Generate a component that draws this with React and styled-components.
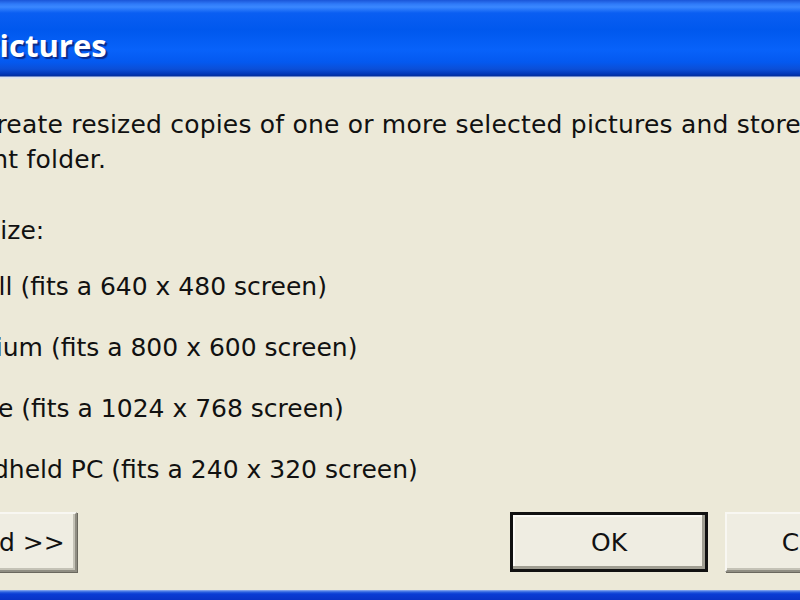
import styled, { createGlobalStyle } from "styled-components";

const GlobalStyle = createGlobalStyle`
  html, body {
    margin: 0;
    padding: 0;
    background: #ece9d8;
  }
  #root {
    width: 800px;
    height: 600px;
  }
`;

const Frame = styled.div`
  width: 800px;
  height: 600px;
  overflow: hidden;
  background: #ece9d8;
`;

const Dialog = styled.section`
  margin-left: -160px;
  width: 1120px;
  height: 600px;
  display: flex;
  flex-direction: column;
  background: #ece9d8;
  font-family: "DejaVu Sans", "Liberation Sans", sans-serif;
  font-size: 25px;
  color: #111;
`;

const TitleBar = styled.header`
  box-sizing: border-box;
  height: 79px;
  padding: 29px 0 0 35px;
  background: linear-gradient(
    to bottom,
    #1a55d8 0px,
    #2f7af8 4px,
    #3b88ff 7px,
    #0a5ef2 13px,
    #0058ee 30px,
    #0862fa 50px,
    #0459f0 62px,
    #0b4fd8 69px,
    #0036b8 74px,
    #002c9c 76px,
    #d6e0f2 77px,
    #e6e8e4 79px
  );
`;

const Title = styled.h1`
  margin: 0;
  font-family: "Open Sans", "DejaVu Sans", sans-serif;
  font-weight: 700;
  font-size: 31px;
  line-height: 32px;
  color: #fff;
  text-shadow: 2px 2px 1px #0a2a8a;
`;

const Body = styled.div`
  flex: 1;
  display: flex;
  flex-direction: column;
  padding: 28px 0 0 39px;
`;

const Intro = styled.p`
  margin: 0 0 0 -2px;
  width: 1045px;
  line-height: 35px;
  letter-spacing: 0.2px;
`;

const Label = styled.p`
  margin: 36px 0 8px;
  line-height: 35px;
`;

const Options = styled.div`
  display: flex;
  flex-direction: column;
`;

const Option = styled.label`
  display: flex;
  align-items: center;
  gap: 14px;
  height: 61px;
  line-height: 61px;
  padding-left: 16px;
`;

const Radio = styled.span`
  box-sizing: border-box;
  width: 34px;
  height: 34px;
  border-radius: 50%;
  border: 3px solid #1c5180;
  background: ${(p) =>
    p.$checked
      ? "radial-gradient(circle, #21a121 0 6px, #fff 7px)"
      : "linear-gradient(135deg, #dcdad0, #fff)"};
`;

const Buttons = styled.div`
  display: flex;
  align-items: center;
  gap: 17px;
  margin-top: 12px;
  width: 1044px;
`;

const Spacer = styled.div`
  flex: 1;
`;

const Button = styled.button`
  box-sizing: border-box;
  width: 198px;
  height: 60px;
  padding: 0;
  font-family: "DejaVu Sans", "Liberation Sans", sans-serif;
  font-size: 25px;
  color: #111;
  background: #efede2;
  border: ${(p) => (p.$default ? "3px solid #111" : "2px solid #f8f7f2")};
  border-right-color: ${(p) => (p.$default ? "#111" : "#8f8d82")};
  border-bottom-color: ${(p) => (p.$default ? "#111" : "#8f8d82")};
  box-shadow: ${(p) =>
    p.$default
      ? "inset -3px -3px 0 #a09e92, inset 2px 2px 0 #fbfaf5"
      : "inset -2px -2px 0 #c4c2b6, 1px 1px 0 #6a685e"};
`;

const BottomEdge = styled.div`
  height: 10px;
  margin-top: auto;
  background: linear-gradient(to bottom, #8fb0f0 0, #2c62e0 2px, #0a3cd4 4px, #0833c6 10px);
`;

const sizes = [
  { name: "Small", w: 640, h: 480 },
  { name: "Medium", w: 800, h: 600 },
  { name: "Large", w: 1024, h: 768 },
  { name: "Handheld PC", w: 240, h: 320 },
];

export default function App() {
  return (
    <>
      <GlobalStyle />
      <Frame>
        <Dialog>
          <TitleBar>
            <Title>Resize Pictures</Title>
          </TitleBar>
          <Body>
            <Intro>
              You can create resized copies of one or more selected pictures and store
              them in the current folder.
            </Intro>
            <Label>Select a size:</Label>
            <Options>
              {sizes.map((s, i) => (
                <Option key={s.name}>
                  <Radio $checked={i === 0} />
                  {s.name} (fits a {s.w} x {s.h} screen)
                </Option>
              ))}
            </Options>
            <Buttons>
              <Button>Advanced &gt;&gt;</Button>
              <Spacer />
              <Button $default>OK</Button>
              <Button>Cancel</Button>
            </Buttons>
          </Body>
          <BottomEdge />
        </Dialog>
      </Frame>
    </>
  );
}
